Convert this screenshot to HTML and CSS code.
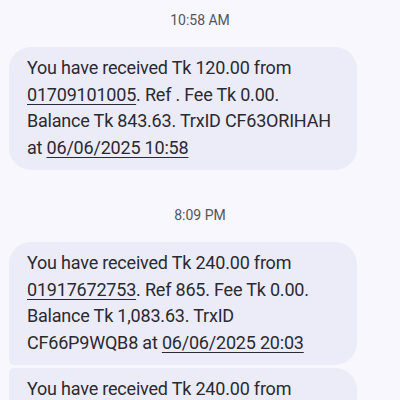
FILE: index.html
```html
<!DOCTYPE html>
<html>
<head>
<meta charset="utf-8">
<title>Messages</title>
<link rel="stylesheet" href="styles.css">
</head>
<body>
	<div class="thread">
		<div class="group">
			<div class="time">10:58 AM</div>
			<div class="msg">You have received Tk 120.00 from <a href="javascript:;">01709101005</a>. Ref . Fee Tk 0.00. Balance Tk 843.63. TrxID CF63ORIHAH at <a href="javascript:;">06/06/2025 10:58</a></div>
		</div>
		<div class="group">
			<div class="time">8:09 PM</div>
			<div class="msg">You have received Tk 240.00 from <a href="javascript:;">01917672753</a>. Ref 865. Fee Tk 0.00. Balance Tk 1,083.63. TrxID CF66P9WQB8 at <a href="javascript:;">06/06/2025 20:03</a></div>
			<div class="msg">You have received Tk 240.00 from <a href="javascript:;">01917672753</a>. Ref 866. Fee Tk 0.00. Balance Tk 1,323.63. TrxID CF66P9WR2K at <a href="javascript:;">06/06/2025 20:05</a></div>
		</div>
	</div>
</body>
</html>
```

FILE: styles.css
```css
*{padding:0;margin:0}
body{background:#f7f7fd;font-family:Roboto,"Noto Sans",sans-serif;color:#2a2a32;}
.thread{padding:10px 43px 20px 9px;}
.group + .group{margin-top:35px;}
.time{text-align:center;font-size:14px;line-height:20px;color:#55555d;padding-bottom:17px;margin-right:-34px;}
.msg{background:#ececf8;border-radius:22px;padding:8px 18px 9px;font-size:18px;line-height:26.5px;letter-spacing:-0.2px;}
.msg a{color:inherit;text-decoration:underline;text-decoration-thickness:1px;text-underline-offset:3px;}
.msg + .msg{margin-top:3px;}
.group .msg:not(:last-child){border-bottom-left-radius:5px;}
.msg + .msg{border-top-left-radius:5px;}
```
